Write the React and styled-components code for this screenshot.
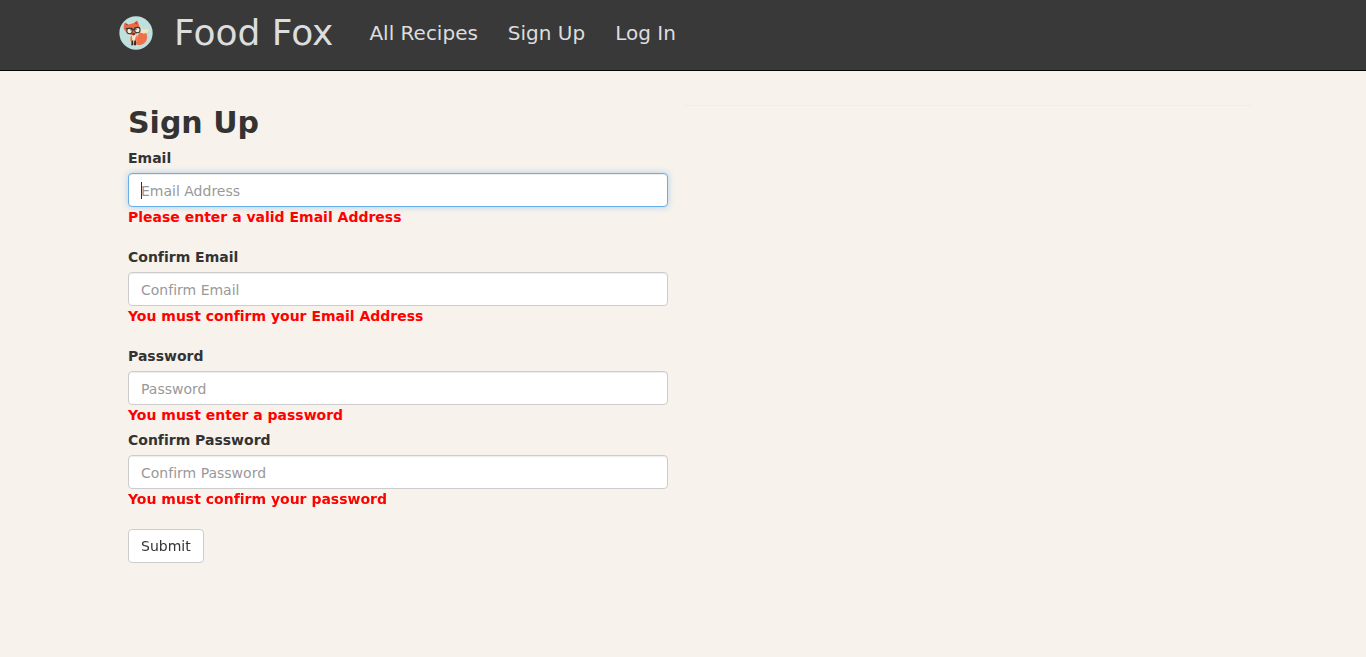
import React from 'react';
import styled, { createGlobalStyle } from 'styled-components';

const GlobalStyle = createGlobalStyle`
  *, *::before, *::after { box-sizing: border-box; }
  body {
    margin: 0;
    background: #f7f2ec;
    color: #333;
    font-family: Verdana, "DejaVu Sans", sans-serif;
    font-size: 14px;
    line-height: 20px;
    font-variant-ligatures: none;
  }
`;

const Navbar = styled.header`
  background: #393939;
  border-bottom: 1px solid #080808;
`;

const NavInner = styled.nav`
  display: flex;
  align-items: center;
  max-width: 1140px;
  height: 70px;
  margin: 0 auto;
  padding: 0 6px 4px;
`;

const Brand = styled.a`
  display: flex;
  align-items: center;
  gap: 21px;
  margin-right: 21px;
  color: #ddd;
  font-size: 36px;
  line-height: 40px;
  text-decoration: none;
`;

const Logo = styled.svg`
  display: block;
  width: 34px;
  height: 34px;
`;

const NavList = styled.ul`
  display: flex;
  margin: 0;
  padding: 0;
  list-style: none;
`;

const NavLink = styled.a`
  display: block;
  padding: 0 15px;
  color: #ddd;
  font-size: 20px;
  line-height: 20px;
  text-decoration: none;
`;

const Page = styled.main`
  display: grid;
  grid-template-columns: 1fr 1fr;
  max-width: 1140px;
  margin: 0 auto;
  padding: 34px 0;
`;

const Form = styled.form`
  padding: 0 15px;
`;

const Title = styled.h1`
  margin: 0 0 8px;
  font-size: 30px;
  line-height: 35px;
`;

const FieldGroup = styled.div`
  display: flex;
  flex-direction: column;
  margin-bottom: ${({ $tight }) => ($tight ? '5px' : '20px')};
`;

const Label = styled.label`
  margin-bottom: 5px;
  font-weight: 700;
`;

const Input = styled.input`
  width: 100%;
  height: 34px;
  padding: 7px 12px 5px;
  border: 1px solid #ccc;
  border-radius: 4px;
  background: #fff;
  box-shadow: inset 0 1px 1px rgba(0, 0, 0, 0.075);
  color: #555;
  font: inherit;
  font-variant-ligatures: none;

  &::placeholder { color: #999; opacity: 1; }
  &:focus {
    border-color: #66afe9;
    outline: 0;
    box-shadow: inset 0 1px 1px rgba(0, 0, 0, 0.075), 0 0 6px rgba(102, 175, 233, 0.5);
  }
  /* A steady caret in the empty field, in place of the blinking one. */
  &:focus:placeholder-shown {
    caret-color: transparent;
    background: linear-gradient(#333, #333) 12px 8px / 1px 17px no-repeat #fff;
  }
`;

const ErrorText = styled.span`
  color: #f00;
  font-weight: 700;
`;

const SubmitButton = styled.button`
  height: 34px;
  padding: 6px 12px;
  border: 1px solid #ccc;
  border-radius: 4px;
  background: #fff;
  color: #333;
  font: inherit;
  cursor: pointer;
`;

const Divider = styled.hr`
  width: 100%;
  margin: 0;
  border: 0;
  border-top: 1px solid #eee;
`;

function FoxLogo() {
  return (
    <Logo viewBox="0 0 100 100" aria-hidden="true">
      <circle cx="50" cy="50" r="49" fill="#bfe0dc" />
      <path d="M48 82C55 70 51 56 63 48C69 43 75 44 79 48C86 61 83 77 70 83C62 87 53 85 48 82Z" fill="#ef704a" />
      <path d="M61 48C68 43 64 35 69 37C74 42 82 37 88 40C85 50 76 53 69 51Z" fill="#f5e6bd" />
      <path d="M36 54H50C54 64 53 72 50 79H36C31 71 32 62 36 54Z" fill="#f7e5c7" />
      <path d="M36 57C32 65 32 72 36 77L39 69L38 57ZM51 55C54 64 54 72 50 78L47 69Z" fill="#ee7650" />
      <path d="M14 38C13 27 15 21 19 19L27 25L42 21L53 13C57 18 60 27 61 37C58 47 52 53 43 58C31 55 19 48 14 38Z" fill="#ee6943" />
      <path d="M19 23L22 29L27 25ZM51 17L46 22L54 25Z" fill="#a74632" />
      <circle cx="31" cy="44" r="8" fill="#f1f1de" stroke="#393532" strokeWidth="3" />
      <circle cx="54" cy="41" r="8" fill="#f1f1de" stroke="#393532" strokeWidth="3" />
      <path d="M20 37L37 36L42 41L47 35L61 34" fill="none" stroke="#393532" strokeWidth="3" />
      <circle cx="35" cy="41" r="2" fill="#393532" />
      <circle cx="50" cy="40" r="2" fill="#393532" />
      <ellipse cx="43" cy="53" rx="4" ry="3" fill="#393532" />
      <path d="M37 72H42V86H36ZM45 72H50V86H44Z" fill="#342826" />
    </Logo>
  );
}

const links = ['All Recipes', 'Sign Up', 'Log In'];

const fields = [
  { id: 'email', label: 'Email', type: 'email', placeholder: 'Email Address', error: 'Please enter a valid Email Address', focus: true },
  { id: 'confirm-email', label: 'Confirm Email', type: 'email', placeholder: 'Confirm Email', error: 'You must confirm your Email Address' },
  { id: 'password', label: 'Password', type: 'password', placeholder: 'Password', error: 'You must enter a password', tight: true },
  { id: 'confirm-password', label: 'Confirm Password', type: 'password', placeholder: 'Confirm Password', error: 'You must confirm your password' },
];

export default function App() {
  return (
    <>
      <GlobalStyle />
      <Navbar>
        <NavInner>
          <Brand href="#"><FoxLogo />Food Fox</Brand>
          <NavList>
            {links.map((text) => <li key={text}><NavLink href="#">{text}</NavLink></li>)}
          </NavList>
        </NavInner>
      </Navbar>
      <Page>
        <Form noValidate onSubmit={(e) => e.preventDefault()}>
          <Title>Sign Up</Title>
          {fields.map((f) => (
            <FieldGroup key={f.id} $tight={f.tight}>
              <Label htmlFor={f.id}>{f.label}</Label>
              <Input id={f.id} type={f.type} placeholder={f.placeholder} autoFocus={f.focus} aria-describedby={`${f.id}-error`} />
              <ErrorText id={`${f.id}-error`}>{f.error}</ErrorText>
            </FieldGroup>
          ))}
          <SubmitButton type="submit">Submit</SubmitButton>
        </Form>
        <Divider />
      </Page>
    </>
  );
}
